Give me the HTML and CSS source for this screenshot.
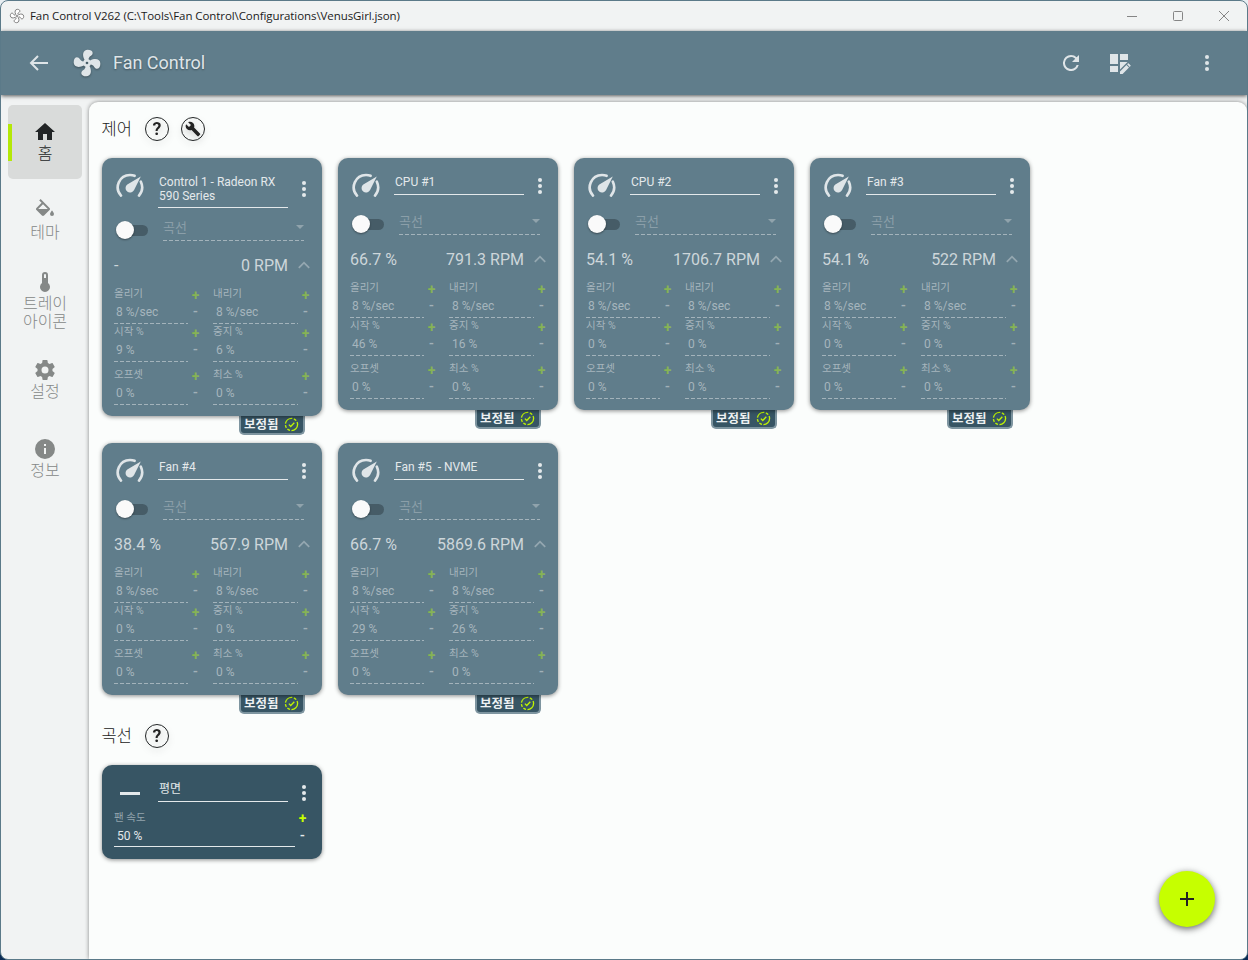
FILE: index.html
```
<!DOCTYPE html>
<html lang="ko">
<head>
<meta charset="utf-8">
<title>Fan Control</title>
<link rel="stylesheet" href="styles.css">
</head>
<body>
<svg class="sprite" aria-hidden="true">
  <symbol id="fan" viewBox="0 0 24 24"><path d="M12 11A1 1 0 0 0 11 12A1 1 0 0 0 12 13A1 1 0 0 0 13 12A1 1 0 0 0 12 11M12.5 2C17 2 17.11 5.57 14.75 6.75C13.76 7.24 13.32 8.29 13.13 9.22C13.61 9.42 14.03 9.73 14.35 10.13C18.05 8.13 22.03 8.92 22.03 12.5C22.03 17 18.46 17.1 17.28 14.73C16.78 13.74 15.72 13.3 14.79 13.11C14.59 13.59 14.28 14 13.88 14.34C15.87 18.03 15.08 22 11.5 22C7 22 6.91 18.42 9.27 17.24C10.25 16.75 10.69 15.71 10.89 14.79C10.4 14.59 9.97 14.27 9.65 13.87C5.96 15.85 2 15.07 2 11.5C2 7 5.56 6.89 6.74 9.26C7.24 10.25 8.29 10.68 9.22 10.87C9.41 10.39 9.73 9.97 10.14 9.65C8.15 5.96 8.94 2 12.5 2Z"/></symbol>
  <symbol id="gauge" viewBox="0 0 30 30"><path d="M6 23.6A12.3 12.3 0 0 1 15 3Q17.6 3 19.6 3.8M25.8 9.6Q29.4 17.3 24 23.6" fill="none" stroke="currentColor" stroke-width="2.6" stroke-linecap="round"/><path d="M25.8 4.4 19.1 18A4.5 4.5 0 1 1 12.3 12.5Z"/></symbol>
  <symbol id="dots" viewBox="0 0 6 18"><circle cx="3" cy="3" r="2.05"/><circle cx="3" cy="9" r="2.05"/><circle cx="3" cy="15" r="2.05"/></symbol>
  <symbol id="up" viewBox="0 0 12 8"><path d="M.8 6.9 6 1.7l5.2 5.2" fill="none" stroke="currentColor" stroke-width="1.8"/></symbol>
  <symbol id="checked" viewBox="0 0 16 16"><circle cx="8" cy="8" r="6.5" fill="none" stroke="currentColor" stroke-width="1.4" stroke-dasharray="10 1.6 3 1.6 3 1.6"/><path d="m5.2 8.1 2 2 3.8-4" fill="none" stroke="currentColor" stroke-width="1.4"/></symbol>
</svg>

<div class="window">
  <div class="titlebar">
    <svg class="titlebar-icon"><use href="#fan"/></svg>
    <span class="titlebar-text">Fan Control V262 (C:\Tools\Fan Control\Configurations\VenusGirl.json)</span>
    <div class="window-buttons">
      <svg viewBox="0 0 12 12"><path d="M1 6.5h10"/></svg>
      <svg viewBox="0 0 12 12"><rect x="1.5" y="1.5" width="9" height="9" rx="1"/></svg>
      <svg viewBox="0 0 12 12"><path d="m1 1 10 10M11 1 1 11"/></svg>
    </div>
  </div>

  <header class="appbar">
    <svg class="back" viewBox="0 0 20 16"><path d="M19 8H2M9 1 2 8l7 7"/></svg>
    <svg class="logo"><use href="#fan"/></svg>
    <h1 class="app-name">Fan Control</h1>
    <div class="actions">
      <svg class="refresh" viewBox="4 4 16 16"><path d="M17.65 6.35A7.96 7.96 0 0 0 12 4a8 8 0 1 0 7.73 10h-2.08A6 6 0 1 1 12 6c1.66 0 3.14.69 4.22 1.78L13 11h7V4z"/></svg>
      <svg class="layout" viewBox="0 0 20 20"><path d="M0 0h8v10H0zM10 0h8v6h-8zM0 12h8v6H0zM10 8h7.500L10 15.500zM10 17.400 16.400 11l2.600 2.600L12.600 20H10zM17.100 10.300l.8-.8q.4-.4.8 0l1.800 1.800q.4.4 0 .8l-.8.8z"/></svg>
      <svg class="more"><use href="#dots"/></svg>
    </div>
  </header>

  <div class="body">
    <nav class="sidebar">
      <a class="nav-item selected">
        <svg viewBox="0 0 24 24"><path d="M10 20v-6h4v6h5v-8h3L12 3 2 12h3v8z"/></svg><span>홈</span>
      </a>
      <a class="nav-item">
        <svg viewBox="0 0 24 24"><path d="M19 11.5s-2 2.17-2 3.5a2 2 0 0 0 4 0c0-1.33-2-3.5-2-3.5M5.21 10 10 5.21 14.79 10m1.77-1.06L7.62 0 6.21 1.41l2.38 2.38-5.15 5.15c-.59.59-.59 1.54 0 2.12l5.5 5.5c.29.29.68.44 1.06.44s.77-.15 1.06-.44l5.5-5.5c.59-.58.59-1.53 0-2.12z"/></svg><span>테마</span>
      </a>
      <a class="nav-item">
        <svg viewBox="0 0 24 24"><path d="M15 13V5a3 3 0 0 0-6 0v8a5 5 0 1 0 6 0m-3-9a1 1 0 0 1 1 1v3h-2V5a1 1 0 0 1 1-1"/></svg><span>트레이<br>아이콘</span>
      </a>
      <a class="nav-item">
        <svg viewBox="0 0 24 24"><path d="M12 15.5A3.5 3.5 0 0 1 8.5 12 3.5 3.5 0 0 1 12 8.5a3.5 3.5 0 0 1 0 7m7.43-2.53c.04-.32.07-.64.07-.97s-.03-.66-.07-1l2.11-1.63c.19-.15.24-.42.12-.64l-2-3.46c-.12-.22-.39-.31-.61-.22l-2.49 1c-.52-.39-1.06-.73-1.69-.98l-.37-2.65A.506.506 0 0 0 14 2h-4c-.25 0-.46.18-.5.42l-.37 2.65c-.63.25-1.17.59-1.69.98l-2.49-1c-.22-.09-.49 0-.61.22l-2 3.46c-.13.22-.07.49.12.64L4.57 11c-.04.34-.07.67-.07 1s.03.65.07.97l-2.11 1.66c-.19.15-.25.42-.12.64l2 3.46c.12.22.39.3.61.22l2.49-1.01c.52.4 1.06.74 1.69.99l.37 2.65c.04.24.25.42.5.42h4c.25 0 .46-.18.5-.42l.37-2.65c.63-.26 1.17-.59 1.69-.99l2.49 1.01c.22.08.49 0 .61-.22l2-3.46c.12-.22.07-.49-.12-.64z"/></svg><span>설정</span>
      </a>
      <a class="nav-item">
        <svg viewBox="0 0 24 24"><path d="M13 9h-2V7h2m0 10h-2v-6h2m-1-9a10 10 0 1 0 0 20 10 10 0 0 0 0-20"/></svg><span>정보</span>
      </a>
    </nav>

    <main class="content">
      <div class="section-head">
        <h2>제어</h2>
        <span class="round">?</span>
        <span class="round"><svg viewBox="0 0 24 24"><path d="m22.7 19-9.1-9.1c.9-2.3.4-5-1.5-6.9-2-2-5-2.4-7.4-1.3L9 6 6 9 1.6 4.7C.4 7.1.9 10.1 2.9 12.1c1.9 1.9 4.6 2.4 6.9 1.5l9.1 9.1c.4.4 1 .4 1.4 0l2.3-2.3c.5-.4.5-1.1.1-1.4"/></svg></span>
      </div>
      <div class="cards" id="controls"></div>

      <div class="section-head curves-head">
        <h2>곡선</h2>
        <span class="round">?</span>
      </div>
      <div class="cards">
        <section class="card curve">
          <div class="card-head">
            <span class="flat-icon"></span>
            <div class="card-title">평면</div>
            <svg class="card-more"><use href="#dots"/></svg>
          </div>
          <div class="param">
            <div class="field"><label>팬 속도</label><span class="value">50 %</span></div>
            <div class="stepper"><b>+</b><i>-</i></div>
          </div>
        </section>
      </div>
      <button class="fab"><svg viewBox="0 0 14 14"><path d="M7 0v14M0 7h14"/></svg></button>
    </main>
  </div>
</div>
<script src="cards.js"></script>
</body>
</html>
```
FILE: styles.css
```
* { box-sizing: border-box; }
body {
  margin: 0;
  height: 960px;
  overflow: hidden;
  background: linear-gradient(#e8eef2 0 50%, #0b2c55 50%);
  font-family: Roboto, "Noto Sans CJK KR", sans-serif;
}
svg { display: block; fill: currentColor; flex: none; }
.sprite { position: absolute; width: 0; height: 0; }
.window {
  display: flex;
  flex-direction: column;
  height: 960px;
  border: 1px solid #5b7a89;
  border-radius: 8px;
  overflow: hidden;
  background: #f1f3f3;
}

/* Title bar */
.titlebar { display: flex; align-items: center; height: 30px; padding-left: 8px; color: #1b1b1b; }
.titlebar-icon { width: 16px; height: 16px; fill: #fff; stroke: #707070; stroke-width: 1.3; overflow: visible; }
.titlebar-text { margin-left: 5px; font: 11.5px/30px "Open Sans", sans-serif; letter-spacing: -.08px; white-space: nowrap; }
.window-buttons { display: flex; gap: 34px; margin-left: auto; padding-right: 17px; }
.window-buttons svg { width: 12px; height: 12px; fill: none; stroke: #858585; }

/* App bar */
.appbar {
  display: flex;
  align-items: center;
  flex: none;
  height: 64px;
  padding-left: 28px;
  background: #607d8b;
  color: #dfe5e8;
  box-shadow: 0 1px 4px rgba(0, 0, 0, .65);
  z-index: 1;
}
.back { width: 20px; height: 16px; fill: none; stroke: currentColor; stroke-width: 2; }
.logo { width: 32px; height: 32px; margin-left: 22px; filter: drop-shadow(0 1px 1px rgba(0, 0, 0, .35)); }
.app-name { margin: 0 0 0 10px; font-size: 18px; font-weight: 400; line-height: 20px; text-shadow: 0 1px 2px rgba(0, 0, 0, .35); }
.actions { display: flex; align-items: center; margin-left: auto; padding-right: 37px; }
.refresh { width: 16px; height: 16px; }
.layout { width: 20px; height: 20px; margin: 2px 0 0 31px; overflow: visible; }
.more { width: 6px; height: 18px; margin-left: 74px; }

/* Sidebar */
.body { display: flex; flex: 1; min-height: 0; }
.sidebar { display: flex; flex-direction: column; gap: 5.3px; flex: none; width: 88px; padding: 10px 7px; }
.nav-item {
  display: flex;
  flex-direction: column;
  align-items: center;
  justify-content: center;
  width: 74px;
  height: 74px;
  padding-bottom: 3px;
  border-radius: 5px;
  color: #858887;
  font: 300 16px/18px "Noto Sans CJK KR", sans-serif;
  text-align: center;
}
.nav-item svg { width: 24px; height: 24px; margin-bottom: -1px; }
.nav-item.selected {
  background: linear-gradient(#b4e808, #b4e808) 0 50% / 4px 37px no-repeat #d9dbda;
  color: #222526;
}

/* Content */
.content {
  position: relative;
  flex: 1;
  margin-top: 7px;
  padding: 14px 12px 0 13px;
  border-radius: 9px 9px 0 0;
  background: #fbfdfc;
  box-shadow: 0 0 4px rgba(0, 0, 0, .45);
}
.section-head { display: flex; align-items: center; gap: 12px; height: 25px; color: #222; }
.section-head h2 { width: 31px; margin: 0; padding-bottom: 2px; text-indent: -.5px; font: 300 16.5px/24px "Noto Sans CJK KR", sans-serif; white-space: nowrap; }
.curves-head { margin-top: 9px; }
.round {
  display: grid;
  place-items: center;
  width: 24px;
  height: 24px;
  border: 1.5px solid #222526;
  border-radius: 50%;
  font-size: 18px;
  font-weight: 600;
  line-height: 1;
  filter: drop-shadow(0 3px 3px rgba(0, 0, 0, .2));
}
.round svg { width: 16px; height: 16px; }
.cards { display: flex; flex-wrap: wrap; align-items: flex-start; gap: 8px 16px; margin-top: 17px; }

/* Card */
.card {
  position: relative;
  width: 220px;
  padding: 13px 12px 11px;
  border-radius: 10px;
  background: #607d8b;
  color: #e4e9eb;
  box-shadow: 0 1px 4px rgba(0, 0, 0, .45);
}
.card-head { display: flex; min-height: 31px; }
.gauge { width: 30px; height: 30px; margin: 1px 13px 0 1px; color: #dfe5e8; }
.card-title {
  width: 130px;
  padding: 5px 0 4px 1px;
  border-bottom: 1px solid #e4e9eb;
  font: 12px/13.5px Roboto, "Noto Sans CJK KR", sans-serif;
  align-self: flex-start;
  min-height: 24px;
}
.card-more { align-self: center; width: 6px; height: 18px; margin: 0 0 2px 13px; }
.source { display: flex; align-items: center; height: 44px; padding-left: 3px; }
.switch { display: flex; align-items: center; width: 31px; height: 11px; border-radius: 6px; background: #465c67; }
.switch::before {
  content: "";
  width: 18px;
  height: 18px;
  margin-left: -1px;
  border-radius: 50%;
  background: #fafafa;
  box-shadow: 0 1px 2px rgba(0, 0, 0, .4);
}
.select {
  display: flex;
  align-items: center;
  justify-content: space-between;
  width: 141px;
  height: 29px;
  margin: 0 0 7px 15px;
  color: #8b9fa9;
  font: 13px/20px "Noto Sans CJK KR", sans-serif;
}
.select::after { content: ""; margin-top: 1px; border: 4px solid transparent; border-top-color: #90a3ac; border-bottom: 0; }
.dashed { background: repeating-linear-gradient(90deg, #a3b3bb 0 4px, transparent 4px 6px) 0 100% / 100% 1.4px no-repeat; }
.readout { display: flex; align-items: center; height: 27px; color: #cdd6da; font-size: 16px; line-height: 27px; }
.readout span { padding-bottom: 1px; }
.rpm { margin-left: auto; }
.readout svg { width: 12px; height: 8px; margin: 0 0 1px 10px; color: #94a7b0; }
.params { display: grid; grid-template-columns: 88px 99px; column-gap: 11px; margin-top: 7px; }
.param { display: flex; height: 38px; }
.param.last { margin-top: 5px; }
.field { flex: 1; display: flex; flex-direction: column; color: #a6b5bd; }
.field label { height: 16px; font: 10.5px/15px Roboto, "Noto Sans CJK KR", sans-serif; }
.field .value { padding-left: 2px; font-size: 12px; line-height: 21px; }
.param:nth-child(even) .value { padding-left: 3px; }
.stepper { display: flex; flex-direction: column; align-items: center; width: 14px; color: #a0b0b8; font-size: 14px; }
.stepper b { height: 18px; line-height: 18px; padding-left: 1px; font-weight: 700; color: #86b356; }
.stepper i { font-style: normal; font-weight: 500; line-height: 15px; padding-left: 1px; }
.badge {
  display: flex;
  align-items: center;
  gap: 5px;
  width: 66px;
  height: 19px;
  margin-left: 137px;
  padding: 0 6px 1px 3px;
  border: 2px solid #7e95a0;
  border-top: 0;
  border-radius: 0 0 5px 5px;
  background: #375564;
  color: #eef2f3;
  font: 700 12.5px/16px "Noto Sans CJK KR", sans-serif;
  white-space: nowrap;
}
.badge svg { width: 15px; height: 15px; color: #c0f500; }

/* Curve card */
.curve { background: #375564; padding-bottom: 12px; height: 94px; }
.flat-icon { width: 20px; height: 3px; margin: 14px 18px 0 6px; background: #e4e9eb; }
.curve .param { margin-top: 0; width: 196px; }
.curve .field { flex: none; width: 181px; border-bottom: 1px solid #e4e9eb; }
.curve .field label { color: #93a4ad; line-height: 17px; }
.curve .field .value { padding-left: 3px; color: #e4e9eb; line-height: 22px; }
.curve .stepper { color: #e4e9eb; }
.curve .stepper b { height: 19px; line-height: 19px; color: #c6ff00; }

.fab {
  position: absolute;
  right: 32px;
  bottom: 32px;
  display: grid;
  place-items: center;
  width: 56px;
  height: 56px;
  border: 0;
  border-radius: 50%;
  background: #c6ff00;
  box-shadow: 0 2px 7px rgba(0, 0, 0, .6);
}
.fab svg { width: 14px; height: 14px; stroke: #222; stroke-width: 2; }
```
FILE: cards.js
```
const labels = ["올리기", "내리기", "시작 %", "중지 %", "오프셋", "최소 %"];
const controls = [
  { name: "Control 1 - Radeon RX 590 Series", duty: "-", rpm: "0", start: 9, stop: 6 },
  { name: "CPU #1", duty: "66.7 %", rpm: "791.3", start: 46, stop: 16 },
  { name: "CPU #2", duty: "54.1 %", rpm: "1706.7", start: 0, stop: 0 },
  { name: "Fan #3", duty: "54.1 %", rpm: "522", start: 0, stop: 0 },
  { name: "Fan #4", duty: "38.4 %", rpm: "567.9", start: 0, stop: 0 },
  { name: "Fan #5 \u00a0- NVME", duty: "66.7 %", rpm: "5869.6", start: 29, stop: 26 },
];

const param = (label, value, last) => `
  <div class="param${last ? " last" : ""}">
    <div class="field dashed"><label>${label}</label><span class="value">${value}</span></div>
    <div class="stepper"><b>+</b><i>-</i></div>
  </div>`;

document.getElementById("controls").innerHTML = controls.map((c) => {
  const values = ["8 %/sec", "8 %/sec", `${c.start} %`, `${c.stop} %`, "0 %", "0 %"];
  return `
  <div class="control">
    <section class="card">
      <div class="card-head">
        <svg class="gauge"><use href="#gauge"/></svg>
        <div class="card-title">${c.name}</div>
        <svg class="card-more"><use href="#dots"/></svg>
      </div>
      <div class="source"><span class="switch"></span><div class="select dashed">곡선</div></div>
      <div class="readout"><span>${c.duty}</span><span class="rpm">${c.rpm} RPM</span><svg><use href="#up"/></svg></div>
      <div class="params">${labels.map((l, i) => param(l, values[i], i > 3)).join("")}</div>
    </section>
    <div class="badge">보정됨<svg><use href="#checked"/></svg></div>
  </div>`;
}).join("");
```
